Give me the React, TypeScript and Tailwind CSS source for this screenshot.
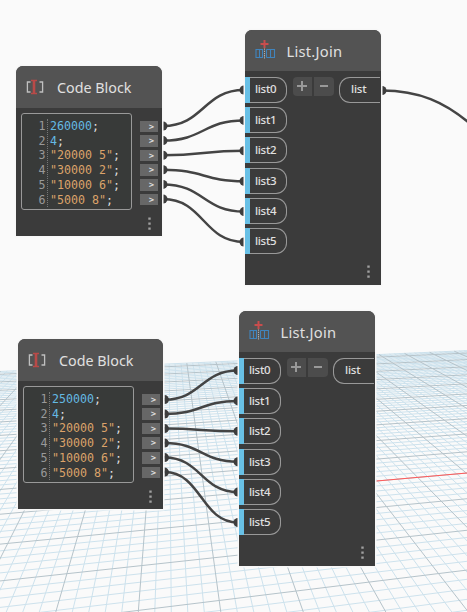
const HORIZON = 225;
const ROW_VP = 3280;
const COL_VP = 168;

// y of a grid row at x; index 0 is the red axis, larger indices are farther away
function rowY(index: number, x: number) {
  const depth = 1 / (0.003644 + index * 0.0000683);
  return HORIZON + (depth * (ROW_VP - x)) / (ROW_VP - COL_VP);
}

function Grid() {
  const far = 52;
  const rows = [];
  for (let i = -22; i <= far; i++) {
    rows.push({ i, y1: rowY(i, 0), y2: rowY(i, 467) });
  }
  const cols = [];
  const farDepth = rowY(far, COL_VP) - HORIZON;
  for (let i = -45; i < 65; i++) {
    const slope = (138.3 + 16.49 * i - COL_VP) / 386.7;
    const t = (farDepth * ROW_VP - farDepth * COL_VP) / (ROW_VP - COL_VP + farDepth * slope);
    cols.push({ i, x1: COL_VP + slope * t, y1: HORIZON + t, x2: COL_VP + slope * 400, y2: 625 });
  }
  return (
    <svg className="absolute inset-0" width="467" height="612" fill="none">
      <g stroke="#cde2ed" strokeWidth="1">
        {rows.filter((r) => r.i % 5).map((r) => <path key={r.i} d={`M0 ${r.y1}L467 ${r.y2}`} />)}
        {cols.filter((c) => c.i % 5).map((c) => <path key={c.i} d={`M${c.x1} ${c.y1}L${c.x2} ${c.y2}`} />)}
      </g>
      <g stroke="#b5c3ca" strokeWidth="1">
        {rows.filter((r) => r.i % 5 === 0).map((r) => <path key={r.i} d={`M0 ${r.y1}L467 ${r.y2}`} />)}
        {cols.filter((c) => c.i % 5 === 0).map((c) => <path key={c.i} d={`M${c.x1} ${c.y1}L${c.x2} ${c.y2}`} />)}
      </g>
      <path d={`M300 ${rowY(0, 300)}L467 ${rowY(0, 467)}`} stroke="#ff5a5a" strokeWidth="1.1" />
    </svg>
  );
}

function Wire({ x1, y1, x2, y2 }: { x1: number; y1: number; x2: number; y2: number }) {
  const m = (x2 - x1) / 2;
  return (
    <g>
      <path d={`M${x1} ${y1}C${x1 + m} ${y1} ${x2 - m} ${y2} ${x2} ${y2}`} stroke="#444" strokeWidth="2.5" fill="none" />
      <path d={`M${x1} ${y1 - 4.5}a4.5 4.5 0 0 1 0 9z`} fill="#3d3d3d" />
      <path d={`M${x2} ${y2 - 4.5}a4.5 4.5 0 0 0 0 9z`} fill="#3d3d3d" />
    </g>
  );
}

function Wires() {
  return (
    <svg className="absolute inset-0" width="467" height="612">
      {[0, 1, 2, 3, 4, 5].map((i) => (
        <g key={i}>
          <Wire x1={163} y1={126 + i * 14.6} x2={244} y2={90 + i * 30.4} />
          <Wire x1={164.5} y1={399.6 + i * 14.5} x2={238} y2={370.5 + i * 30.4} />
        </g>
      ))}
      <path d="M382 90.5C420 90.5 445 103 468 122" stroke="#444" strokeWidth="2.5" fill="none" />
      <path d="M382 86a4.5 4.5 0 0 1 0 9z" fill="#3d3d3d" />
    </svg>
  );
}

function More() {
  return (
    <svg width="3" height="13" fill="#a0a0a0">
      <path d="M.3 .4h2.4v2.4H.3zM.3 5.4h2.4v2.4H.3zM.3 10.4h2.4v2.4H.3z" />
    </svg>
  );
}

function CodeIcon() {
  return (
    <svg width="18" height="16" viewBox="0 0 18 16" fill="none">
      <path d="M4.5 3H1.4v10h3.1M13.5 3h3.1v10h-3.1" stroke="#c0c0c0" strokeWidth="1.3" />
      <path d="M5 1.5h6M5 14.5h6" stroke="#b94a48" strokeWidth="1.4" />
      <path d="M8 1v14" stroke="#b94a48" strokeWidth="2.6" />
    </svg>
  );
}

function JoinIcon() {
  return (
    <svg className="overflow-visible" width="20" height="20" viewBox="0 0 20 20" fill="none">
      <path d="M9.5 -1v8M5.5 3h8" stroke="#c84d4d" strokeWidth="2" />
      <path d="M8 8.5H1v8h7M4.5 8.5v8M7.5 8.5v8M11.5 8.5h8v8h-8M11.5 8.5v8M15.5 8.5v8" stroke="#4084bd" strokeWidth="1.1" />
      <path d="M9.5 7.5v11" stroke="#b0b0b0" strokeWidth="1.1" strokeDasharray="1.3 .9" />
    </svg>
  );
}

function CodeBlock({ lines, place }: { lines: string[]; place: string }) {
  return (
    <section className={`absolute flex h-[170px] flex-col rounded-t-[7px] bg-[#3b3b3b] shadow-[0_0_0_1.5px_#f7f7f7] ${place}`}>
      <header className="flex h-[41.5px] shrink-0 items-center rounded-t-[7px] bg-[#535353] pt-[1px] pl-[10px]">
        <CodeIcon />
        <h2 className="ml-[13px] pt-[1px] whitespace-nowrap font-['Noto_Sans'] text-[14.3px] leading-5 text-[#e0e0e0]">Code Block</h2>
      </header>
      <div className="flex pt-[5.5px] pl-[5px]">
        <div className="flex h-[97px] w-[111px] rounded-[3px] border border-[#999] bg-[#383a39] pt-[4.9px] font-['DejaVu_Sans_Mono'] text-[11.63px] leading-[14.8px]">
          <div className="h-[88px] w-[26px] border-r border-dotted border-[#777] pr-[1.5px] text-right text-[#999]">
            {lines.map((l, i) => <div key={l}>{i + 1}</div>)}
          </div>
          <div className="pl-[2px] whitespace-pre text-[#dedede]">
            {lines.map((l, i) => (
              <div key={l}>
                <span className={i < 2 ? "text-[#64b9e3]" : "text-[#dca36a]"}>{l}</span>;
              </div>
            ))}
          </div>
        </div>
        <div className="ml-[8px] flex flex-col gap-[3px] pt-[7.6px]">
          {lines.map((l) => (
            <div key={l} className="flex h-[11.6px] w-[18px] items-center justify-center bg-[#676767] pl-[5px] font-['Noto_Sans'] text-[9.5px] leading-none font-bold text-[#dedede]">
              &gt;
            </div>
          ))}
        </div>
      </div>
      <div className="flex justify-end pt-[7px] pr-[11.5px]"><More /></div>
    </section>
  );
}

function ListJoin({ place }: { place: string }) {
  return (
    <section className={`absolute flex h-[255px] w-[136px] flex-col rounded-t-[7px] bg-[#3b3b3b] font-['Noto_Sans'] text-[#e0e0e0] shadow-[0_0_0_1.5px_#f7f7f7] ${place}`}>
      <header className="flex h-[41px] shrink-0 items-center rounded-t-[7px] bg-[#535353] pl-[10px]">
        <JoinIcon />
        <h2 className="ml-[11.5px] text-[14.7px] leading-5 tracking-[0.25px]">List.Join</h2>
      </header>
      <div className="flex items-start pt-[5.5px]">
        <div className="flex flex-col gap-[4.4px]">
          {[0, 1, 2, 3, 4, 5].map((i) => (
            <div key={i} className="flex h-[26px] w-[42px] items-center rounded-r-[11px] border border-l-0 border-[#999] text-[11.5px] font-medium tracking-[-0.3px]">
              <i className="h-[26px] w-[4.5px] shrink-0 bg-[#68c0e6]" />
              <span className="pb-[1px] pl-[5.5px]">list{i}</span>
            </div>
          ))}
        </div>
        <div className="ml-[5.5px] flex gap-[2px]">
          <div className="flex size-[19.5px] items-center justify-center rounded-l-[4px] bg-[#4c4c4c]">
            <svg width="10" height="10"><path d="M5 0v10M0 5h10" stroke="#999" strokeWidth="2" /></svg>
          </div>
          <div className="flex size-[19.5px] items-center justify-center rounded-r-[4px] bg-[#4c4c4c]">
            <svg width="8" height="10"><path d="M0 5h8" stroke="#999" strokeWidth="2" /></svg>
          </div>
        </div>
        <div className="ml-[5.5px] flex h-[26px] w-[41px] items-center rounded-l-[11px] border border-r-0 border-[#999] pb-[1px] pl-[11px] text-[11.5px] font-medium tracking-[-0.2px]">list</div>
      </div>
      <div className="flex justify-end pt-[10.5px] pr-[11px]"><More /></div>
    </section>
  );
}

export default function App() {
  return (
    <main className="relative h-[612px] w-[467px] overflow-hidden bg-[#fafafa]">
      <Grid />
      <Wires />
      <CodeBlock place="left-[16px] top-[66px] w-[146px]" lines={["260000", "4", '"20000 5"', '"30000 2"', '"10000 6"', '"5000 8"']} />
      <ListJoin place="left-[245px] top-[30px]" />
      <CodeBlock place="left-[18px] top-[339px] w-[145px]" lines={["250000", "4", '"20000 5"', '"30000 2"', '"10000 6"', '"5000 8"']} />
      <ListJoin place="left-[239px] top-[311px]" />
    </main>
  );
}
